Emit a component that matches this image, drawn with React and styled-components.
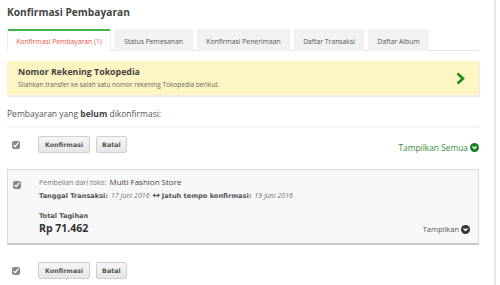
import React from 'react'
import styled, { createGlobalStyle } from 'styled-components'

const GlobalStyle = createGlobalStyle`
  html, body {
    margin: 0;
    padding: 0;
    background: #fff;
  }
  body {
    font-family: 'Open Sans', 'DejaVu Sans', sans-serif;
    color: #555;
  }
`

const Page = styled.div`
  width: 472px;
  height: 285px;
  padding: 0 15px 0 7px;
  border-right: 2px solid #e8e8e8;
  overflow: hidden;
`

const Title = styled.h1`
  margin: 0;
  padding-top: 5px;
  font-size: 10.2px;
  font-weight: 700;
  color: #444;
  line-height: 14px;
`

const Tabs = styled.div`
  display: flex;
  gap: 4px;
  margin-top: 10px;
  border-bottom: 1px solid #e3e3e3;
  padding-left: 1px;
`

const Tab = styled.div`
  height: 22px;
  box-sizing: border-box;
  width: ${p => p.w}px;
  display: flex;
  align-items: center;
  justify-content: center;
  font-size: 6.8px;
  color: ${p => (p.active ? '#e3573f' : '#555')};
  background: ${p => (p.active ? '#fff' : '#f2f2f2')};
  border-top: 2px solid ${p => (p.active ? '#42b549' : '#f2f2f2')};
  box-shadow: ${p => (p.active ? '1px 0 0 #eee, -1px 0 0 #eee' : 'none')};
  margin-bottom: -1px;
`

const Banner = styled.div`
  margin-top: 10px;
  height: 34px;
  box-sizing: border-box;
  background: #fdf5c2;
  box-shadow: 1px 2px 1px #ececec;
  display: flex;
  align-items: center;
  justify-content: space-between;
  padding: 0 14px 0 11px;
`

const BannerText = styled.div`
  display: flex;
  flex-direction: column;
`

const BannerTitle = styled.div`
  font-size: 8.8px;
  font-weight: 700;
  color: #444;
  line-height: 12px;
`

const BannerSub = styled.div`
  font-size: 6.5px;
  color: #666;
  line-height: 10px;
  margin-top: 2px;
`

const Pending = styled.p`
  margin: 13px 0 0;
  font-size: 8.5px;
  color: #555;
  line-height: 12px;

  b {
    font-weight: 700;
    color: #444;
  }
`

const ActionRow = styled.div`
  display: flex;
  align-items: flex-start;
  height: 43px;
  box-sizing: border-box;
  padding-top: 8px;
  border-top: ${p => (p.top ? '2px solid #f5f5f5' : 'none')};
  margin-top: ${p => p.mt || 0}px;
`

const Check = styled.input.attrs({ type: 'checkbox', defaultChecked: true })`
  width: 8px;
  height: 8px;
  margin: 5px 18px 0 5px;
  accent-color: #888;
  filter: grayscale(1);
`

const Button = styled.button`
  height: 17px;
  box-sizing: border-box;
  padding: 0 ${p => p.px || 5}px;
  margin-right: 6px;
  font-family: 'DejaVu Sans', sans-serif;
  font-size: 6.3px;
  font-weight: 700;
  color: #555;
  background: linear-gradient(#f6f6f6, #e6e6e6);
  border: 1px solid #cfcfcf;
  border-radius: 2px;
`

const ShowAll = styled.div`
  margin-left: auto;
  margin-top: 6px;
  display: flex;
  align-items: center;
  gap: 2px;
  font-size: 8.4px;
  color: #3b8a3b;
`

const Card = styled.div`
  background: #f8f8f8;
  border: 1px solid #dcdcdc;
  border-bottom: 2px solid #c8c8c8;
  height: 76px;
  box-sizing: border-box;
  display: flex;
  align-items: flex-start;
  padding: 6px 8px 0 0;
`

const CardBody = styled.div`
  flex: 1;
  display: flex;
  flex-direction: column;
`

const Line = styled.div`
  font-size: ${p => p.size || 7}px;
  line-height: 12px;
  color: #555;
  white-space: nowrap;
`

const Muted = styled.span`
  color: #777;
`

const Store = styled.span`
  font-size: 8px;
  color: #444;
  margin-left: 3px;
`

const Strong = styled.span`
  font-family: 'DejaVu Sans', sans-serif;
  font-weight: 700;
  color: #555;
  font-size: ${p => p.size || 6.6}px;
`

const DateText = styled.em`
  color: #777;
  margin: 0 3px;
`

const Total = styled.div`
  margin-top: 8px;
  display: flex;
  align-items: flex-end;
  justify-content: space-between;
`

const Amount = styled.div`
  font-size: 10.5px;
  font-weight: 700;
  color: #333;
  line-height: 13px;
`

const Toggle = styled.div`
  display: flex;
  align-items: center;
  gap: 2px;
  font-size: 7.5px;
  color: #555;
  margin-bottom: 1px;
`

const CircleDown = ({ color }) => (
  <svg width="9" height="9" viewBox="0 0 10 10">
    <circle cx="5" cy="5" r="5" fill={color} />
    <path d="M2.8 4 L5 6.2 L7.2 4" stroke="#fff" strokeWidth="1.6" fill="none" />
  </svg>
)

const Chevron = () => (
  <svg width="9" height="13" viewBox="0 0 9 13">
    <path d="M1.5 1.5 L7 6.5 L1.5 11.5" stroke="#1e8a1e" strokeWidth="2.6" fill="none" />
  </svg>
)

const tabs = [
  { label: 'Konfirmasi Pembayaran (1)', w: 102, active: true },
  { label: 'Status Pemesanan', w: 79 },
  { label: 'Konfirmasi Penerimaan', w: 93 },
  { label: 'Daftar Transaksi', w: 70 },
  { label: 'Daftar Album', w: 61 },
]

const Actions = ({ top, mt, showAll }) => (
  <ActionRow top={top} mt={mt}>
    <Check />
    <Button px={6}>Konfirmasi</Button>
    <Button>Batal</Button>
    {showAll && (
      <ShowAll>
        Tampilkan Semua <CircleDown color="#1e7f1e" />
      </ShowAll>
    )}
  </ActionRow>
)

export default function App() {
  return (
    <Page>
      <GlobalStyle />
      <Title>Konfirmasi Pembayaran</Title>
      <Tabs>
        {tabs.map(t => (
          <Tab key={t.label} w={t.w} active={t.active}>
            {t.label}
          </Tab>
        ))}
      </Tabs>
      <Banner>
        <BannerText>
          <BannerTitle>Nomor Rekening Tokopedia</BannerTitle>
          <BannerSub>Silahkan transfer ke salah satu nomor rekening Tokopedia berikut.</BannerSub>
        </BannerText>
        <Chevron />
      </Banner>
      <Pending>
        Pembayaran yang <b>belum</b> dikonfirmasi:
      </Pending>
      <Actions top mt={6} showAll />
      <Card>
        <Check />
        <CardBody>
          <Line>
            <Muted>Pembelian dari toko:</Muted>
            <Store>Multi Fashion Store</Store>
          </Line>
          <Line>
            <Strong>Tanggal Transaksi:</Strong>
            <DateText>17 Juni 2016</DateText>
            <Strong size={9}>↔</Strong>{' '}
            <Strong>Jatuh tempo konfirmasi:</Strong>
            <DateText>19 Juni 2016</DateText>
          </Line>
          <Total>
            <div>
              <Line>
                <Strong>Total Tagihan</Strong>
              </Line>
              <Amount>Rp 71.462</Amount>
            </div>
            <Toggle>
              Tampilkan <CircleDown color="#333" />
            </Toggle>
          </Total>
        </CardBody>
      </Card>
      <Actions mt={9} />
    </Page>
  )
}
